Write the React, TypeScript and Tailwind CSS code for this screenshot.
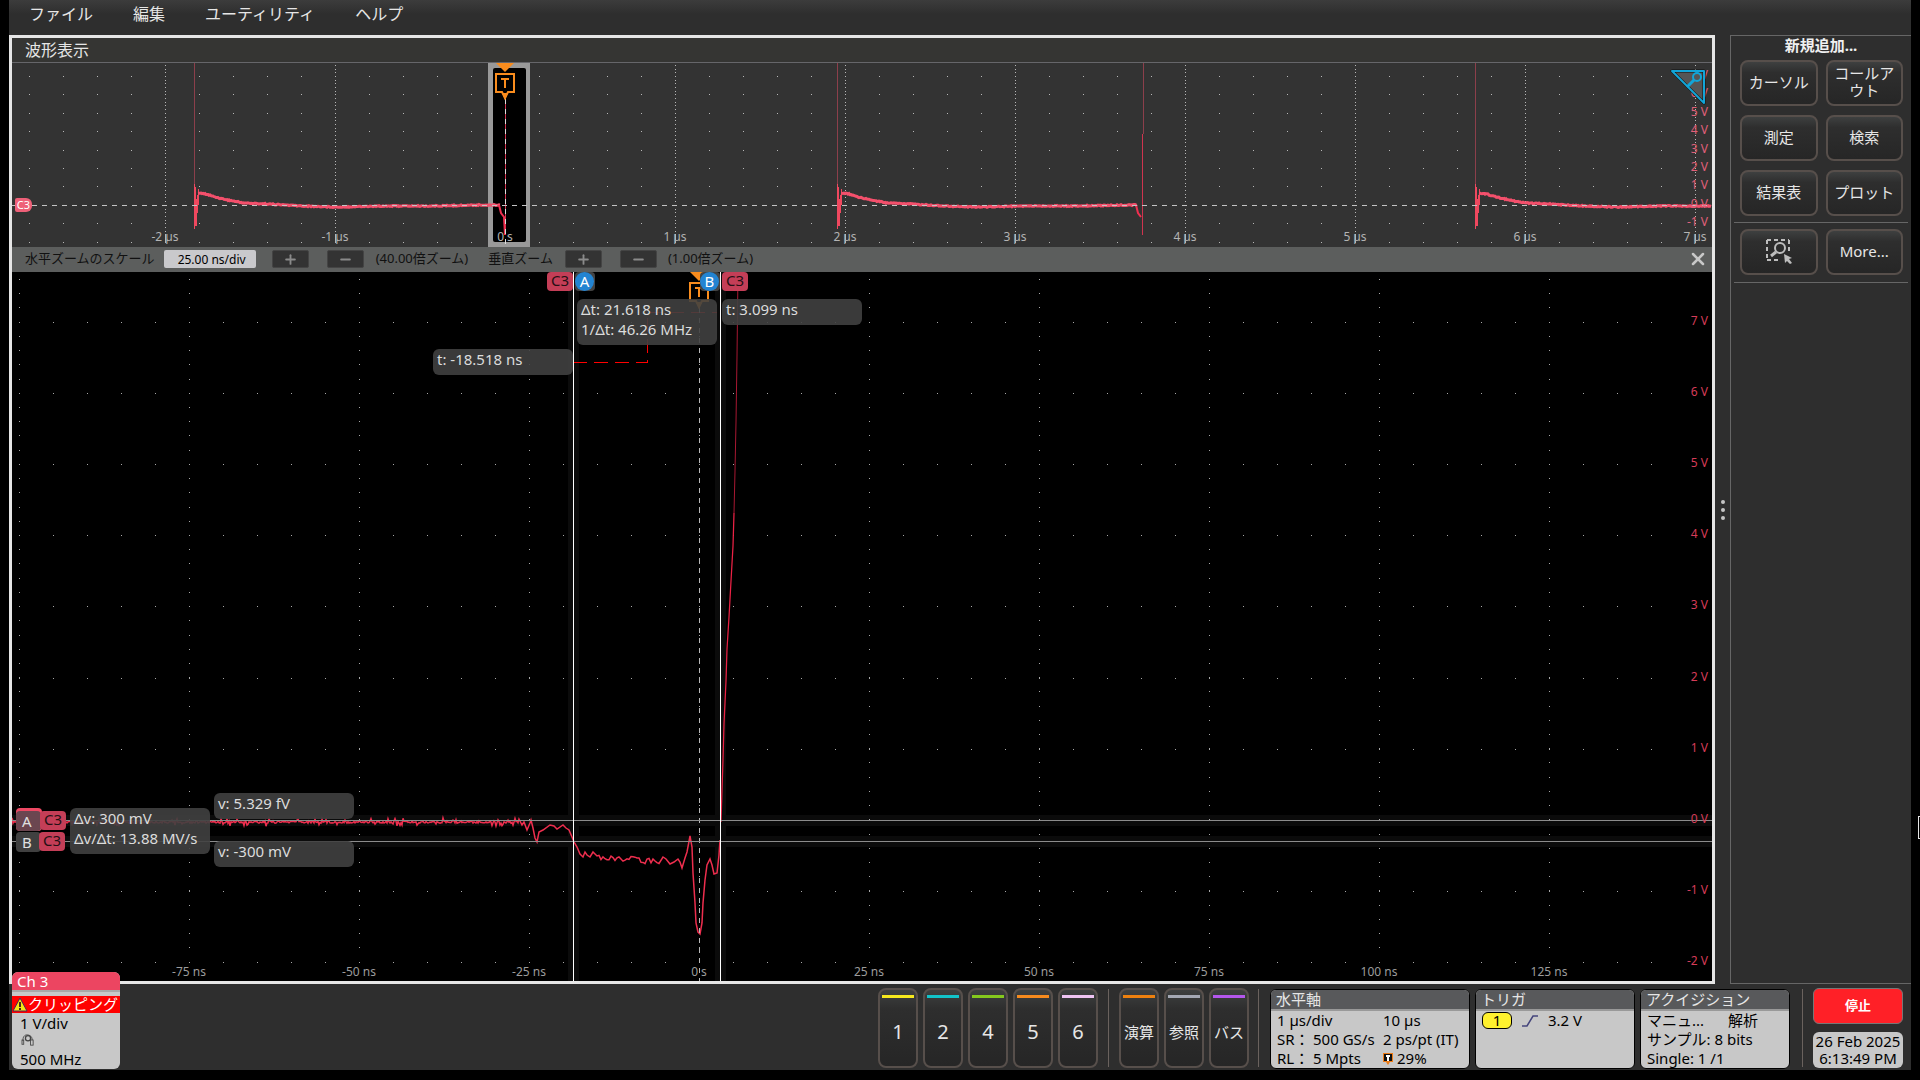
import React from 'react';
import { Plus, Minus, X } from 'lucide-react';

const PLOT_W = 1700;
const OVER_H = 184;
const MAIN_H = 709;

type Point = [number, number];

const toPath = (points: Point[]) => 'M' + points.map(([x, y]) => `${x} ${y}`).join('L');

const range = (n: number) => Array.from({ length: n }, (_, i) => i);

// small repeatable noise, so the trace looks the same on every render
const noise = (i: number) => {
  const v = Math.sin(i * 12.9898) * 43758.5453;
  return (v - Math.floor(v)) * 2 - 1;
};

const place = (x: number, y: number, h: number) => ({
  left: `${(x / PLOT_W) * 100}%`,
  top: `${(y / h) * 100}%`,
});

const gridDots = (
  x0: number,
  y0: number,
  rowStep: number,
  rows: number,
  colStep: number,
  colDots: number,
  colTop: number,
  skipRow: number
) => {
  let d = '';
  range(rows).forEach((r) => {
    if (r === skipRow) return;
    const y = Math.round(y0 + r * rowStep) + 0.5;
    for (let x = x0; x < PLOT_W - 40; x += 34) d += `M${x} ${y}h1`;
  });
  range(10).forEach((c) => {
    range(colDots).forEach((k) => {
      const x = c * 170 + (x0 === 7 ? 7 : 153);
      if (x < PLOT_W) d += `M${x} ${Math.round(colTop + k * colStep) + 0.5}h1`;
    });
  });
  return d;
};

const overviewGrid = gridDots(17, 13, 18.4, 10, 3.68, 48, 2, 7);
const mainGrid = gridDots(7, 50, 71.1, 10, 14.22, 49, 7, 7);
const overviewTicks = range(10)
  .map((c) => `M${153.5 + c * 170} 171v9`)
  .join('');

// one discharge cycle of the overview trace, relative to its leading edge
const decay: Point[] = [
  [4, 130], [12, 131], [21, 134], [34, 137], [50, 140], [74, 141],
  [108, 143], [140, 144], [193, 143], [240, 143], [286, 142],
];

const cycle = (x: number, end: number) => {
  const pts: Point[] = [];
  for (let i = 4; i <= end; i += 1) {
    let k = 0;
    while (k < decay.length - 2 && decay[k + 1][0] < i) k += 1;
    const [ax, ay] = decay[k];
    const [bx, by] = decay[k + 1];
    const t = Math.min(1, (i - ax) / (bx - ax));
    pts.push([x + i, ay + (by - ay) * t + noise(i + x) * 0.5]);
  }
  return toPath(pts);
};

const burst = (x: number) =>
  `M${x + 0.5} 121V166M${x + 1.5} 124V163M${x + 2.5} 136V163M${x + 3.5} 132V150M${x + 4.5} 126V142`;

const mainTrace = (() => {
  const pts: Point[] = [];
  for (let x = 0; x <= 506; x += 1) {
    const spike = noise(x * 3) > 0.84 ? 3 : noise(x * 5) < -0.9 ? -3 : 0;
    pts.push([x, 550 + noise(x) * 1.2 + spike]);
  }
  const knee: Point[] = [
    [507, 547], [510, 553], [512, 550], [515, 558], [518, 551], [519, 548], [521, 556],
    [523, 566], [525, 570], [527, 560], [531, 558], [538, 553], [542, 554], [545, 557],
    [551, 553], [554, 556], [557, 558], [560, 565], [562, 570], [565, 575], [568, 582],
    [571, 585], [573, 580], [575, 583], [578, 585], [581, 580], [585, 584],
  ];
  pts.push(...knee);
  for (let x = 587; x <= 648; x += 2) pts.push([x, 584.5 + (x - 587) * 0.09 + noise(x) * 3]);
  const tail: Point[] = [
    [651, 585], [654, 587], [658, 592], [662, 590], [666, 587], [668, 590], [670, 596],
    [673, 586], [675, 580], [678, 564], [680, 575], [681, 601], [683, 631], [684, 651],
    [686, 660], [688, 662], [690, 651], [691, 631], [693, 608], [695, 593], [698, 587],
    [700, 593], [702, 602], [705, 601], [707, 583], [708, 568],
  ];
  pts.push(...tail);
  return toPath(pts);
})();

const risingLow: Point[] = [
  [709, 550], [710, 518], [711, 488], [712, 452], [714, 409], [715, 377],
  [717, 345], [719, 309], [721, 274], [722, 241],
];
const risingHigh: Point[] = [[722, 241], [723, 199], [724, 150], [725, 84], [726, 0]];

const channels = [
  { label: '1', bar: 'bg-[#f5e81e]' },
  { label: '2', bar: 'bg-[#12c3c9]' },
  { label: '4', bar: 'bg-[#84c81e]' },
  { label: '5', bar: 'bg-[#f58a1e]' },
  { label: '6', bar: 'bg-[#eec3f2]' },
];

const extras = [
  { label: '演算', bar: 'bg-[#ec800f]' },
  { label: '参照', bar: 'bg-[#a4a8b4]' },
  { label: 'バス', bar: 'bg-[#b457ec]' },
];

const raised =
  'border-2 border-[#574f4b] rounded-lg bg-linear-to-b from-[#3e4040] via-[#2e2e2e] via-25% to-[#262626] text-[#e6e6e6]';

const TriggerTag = () => (
  <svg width="20" height="38" viewBox="0 0 20 38" aria-hidden="true">
    <path d="M1 0H19L10 9Z" fill="#f98c1d" />
    <path d="M1 11H19V29H13L10 35L7 29H1Z" fill="#000" stroke="#f98c1d" strokeWidth="2" />
    <path d="M7 30H13L10 37Z" fill="#f98c1d" />
    <path d="M6 16H14M10 16V25" stroke="#f98c1d" strokeWidth="2" />
  </svg>
);

const Readout = ({ x, y, lines }: { x: number; y: number; lines: string[] }) => (
  <div
    className="absolute w-[140px] rounded-md bg-[#404040]/90 px-1 pb-[6px] text-[15px] leading-[20px] whitespace-nowrap text-[#dcdcdc]"
    style={place(x, y, MAIN_H)}
  >
    {lines.map((line) => (
      <div key={line}>{line}</div>
    ))}
  </div>
);

const SourceTag = ({ x, y }: { x: number; y: number }) => (
  <div
    className="absolute h-[19px] w-[26px] rounded-sm bg-[#c43e57] text-center text-[15px] leading-[17px] text-[#241014]"
    style={place(x, y, MAIN_H)}
  >
    C3
  </div>
);

const CursorKnob = ({ x, label }: { x: number; label: string }) => (
  <div
    className="absolute h-[19px] w-[20px] rounded-sm bg-[#444]"
    style={place(x, 0, MAIN_H)}
  >
    <div className="h-[19px] w-[19px] rounded-full bg-[#2384d2] text-center text-[15px] leading-[18px] text-white">
      {label}
    </div>
  </div>
);

const Overview = () => (
  <div className="relative h-[184px] overflow-hidden bg-[#333]">
    <svg
      className="absolute inset-0 h-full w-full"
      viewBox={`0 0 ${PLOT_W} ${OVER_H}`}
      preserveAspectRatio="none"
      fill="none"
    >
      <path d={overviewGrid} stroke="#b8b8b8" shapeRendering="crispEdges" />
      <path d={overviewTicks} stroke="#b8b8b8" shapeRendering="crispEdges" />
      <rect x="476" y="0" width="42" height="184" fill="#999" />
      <rect x="481" y="5" width="33" height="174" rx="2" fill="#000" />
      <path d="M182.5 0V125M825.5 0V125M1131.5 0V71M1463.5 0V125" stroke="#8c3f4b" shapeRendering="crispEdges" />
      <path d="M1130.5 71V172M493.5 40V172" stroke="#d0344f" shapeRendering="crispEdges" />
      <path d={burst(182) + burst(825) + burst(1463)} stroke="#f0485f" />
      <path d={cycle(182, 306) + cycle(825, 300) + cycle(1463, 236)} stroke="#f4506c" strokeWidth="3" />
      <path d="M487 142L489 150L492 154L493 172M1124 142L1126 150L1129 154" stroke="#f02f50" strokeWidth="2" />
      <path d="M0 142.5H1700" stroke="#c4c4c4" strokeDasharray="5 5" shapeRendering="crispEdges" />
      <path d="M493.5 36V184" stroke="#dcdcdc" strokeDasharray="5 5" shapeRendering="crispEdges" />
    </svg>
    {['-2 µs', '-1 µs', '0 s', '1 µs', '2 µs', '3 µs', '4 µs', '5 µs', '6 µs', '7 µs'].map((t, i) => (
      <span
        key={t}
        className="absolute -translate-x-1/2 text-xs leading-[10px] whitespace-nowrap text-[#b4b4b4]"
        style={place(153 + i * 170, 169, OVER_H)}
      >
        {t}
      </span>
    ))}
    {range(9).map((i) => (
      <span
        key={i}
        className="absolute right-1 -translate-y-1/2 text-xs leading-[10px] text-[#e0607a]"
        style={{ top: `${((12 + i * 18.4) / OVER_H) * 100}%` }}
      >
        {7 - i} V
      </span>
    ))}
    <div className="absolute -translate-x-1/2" style={place(493, 0, OVER_H)}>
      <TriggerTag />
    </div>
    <div
      className="absolute flex h-[14px] w-[17px] items-center justify-center rounded-l-xs rounded-r-md bg-[#ee6078] text-[11px] text-white"
      style={place(3, 135, OVER_H)}
    >
      C3
    </div>
    <svg width="36" height="36" viewBox="0 0 36 36" className="absolute top-[6px] right-[6px]" fill="none">
      <path d="M2 2H34V34Z" fill="#555" stroke="#111" strokeWidth="3" strokeLinejoin="round" />
      <path d="M2 2H34V34Z" stroke="#12a5d8" strokeWidth="2" strokeLinejoin="round" />
      <circle cx="27" cy="8" r="4" stroke="#12a5d8" strokeWidth="2" />
      <path d="M24 11L17 18" stroke="#12a5d8" strokeWidth="3" />
    </svg>
  </div>
);

const ZoomStep = ({ kind, label }: { kind: 'plus' | 'minus'; label: string }) => (
  <button
    aria-label={label}
    className="flex h-[18px] w-[37px] items-center justify-center rounded-xs border border-[#444] bg-[#333] text-[#8a8a8a]"
  >
    {kind === 'plus' ? <Plus size={15} strokeWidth={3} /> : <Minus size={15} strokeWidth={3} />}
  </button>
);

const ZoomBar = () => (
  <div className="flex h-[25px] items-center bg-[#5c5e5d] pr-1 pb-px pl-[13px] text-[13px] whitespace-nowrap text-[#111]">
    <label htmlFor="hscale">水平ズームのスケール</label>
    <input
      id="hscale"
      type="text"
      defaultValue="25.00 ns/div"
      className="ml-[9px] h-[18px] w-[92px] rounded-xs bg-[#c9c9cc] pl-1 text-center text-xs text-black"
    />
    <div className="ml-4 flex gap-[18px]">
      <ZoomStep kind="plus" label="水平ズームを拡大" />
      <ZoomStep kind="minus" label="水平ズームを縮小" />
    </div>
    <span className="ml-3">(40.00倍ズーム)</span>
    <span className="ml-5">垂直ズーム</span>
    <div className="ml-3 flex gap-[18px]">
      <ZoomStep kind="plus" label="垂直ズームを拡大" />
      <ZoomStep kind="minus" label="垂直ズームを縮小" />
    </div>
    <span className="ml-[11px]">(1.00倍ズーム)</span>
    <button aria-label="ズームを閉じる" className="ml-auto text-[#c8c8c8]">
      <X size={20} strokeWidth={3} />
    </button>
  </div>
);

const MainPlot = () => (
  <div className="relative flex-1 overflow-hidden bg-black">
    <svg
      className="absolute inset-0 h-full w-full"
      viewBox={`0 0 ${PLOT_W} ${MAIN_H}`}
      preserveAspectRatio="none"
      fill="none"
    >
      <path d="M556 0H567V709H556ZM703 0H714V709H703ZM0 543H1700V554H0ZM0 564H1700V575H0Z" fill="#0b0b0b" />
      <path d={mainGrid} stroke="#a8a8a8" shapeRendering="crispEdges" />
      <path d={toPath(risingHigh)} stroke="#a81832" />
      <path d={toPath(risingLow)} stroke="#ec2245" strokeWidth="1.25" />
      <path d={mainTrace} stroke="#ee2e4e" strokeWidth="1.5" />
      <path d="M561 90.5H635.5V40.5H705" stroke="#ff0000" strokeDasharray="14 7" shapeRendering="crispEdges" />
      <path d="M687.5 36V709" stroke="#b8b8b8" strokeDasharray="5 5" shapeRendering="crispEdges" />
      <path d="M0 548.5H1700M0 569.5H1700" stroke="#8c8c8c" shapeRendering="crispEdges" />
      <path d="M561.5 0V709M708.5 0V709" stroke="#fff" shapeRendering="crispEdges" />
    </svg>
    {['-75 ns', '-50 ns', '-25 ns', '0 s', '25 ns', '50 ns', '75 ns', '100 ns', '125 ns'].map((t, i) => (
      <span
        key={t}
        className="absolute bottom-px -translate-x-1/2 text-xs whitespace-nowrap text-[#9c9c9c]"
        style={{ left: `${((177 + i * 170) / PLOT_W) * 100}%` }}
      >
        {t}
      </span>
    ))}
    {range(10).map((i) => (
      <span
        key={i}
        className="absolute right-1 -translate-y-1/2 text-xs text-[#d63c58]"
        style={{ top: `${((49 + i * 71.1) / MAIN_H) * 100}%` }}
      >
        {7 - i} V
      </span>
    ))}
    <div className="absolute -translate-x-1/2" style={place(687, 0, MAIN_H)}>
      <TriggerTag />
    </div>

    <SourceTag x={535} y={0} />
    <CursorKnob x={563} label="A" />
    <CursorKnob x={688} label="B" />
    <SourceTag x={710} y={0} />
    <Readout x={565} y={27} lines={['Δt: 21.618 ns', '1/Δt: 46.26 MHz']} />
    <Readout x={710} y={27} lines={['t: 3.099 ns']} />
    <Readout x={421} y={77} lines={['t: -18.518 ns']} />

    <div className="absolute h-[23px] w-[26px] rounded-sm bg-[#ee4863]" style={place(4, 536, MAIN_H)} />
    <div
      className="absolute h-[20px] w-[25px] rounded-sm bg-[#6b4650] pl-[6px] text-[15px] leading-[20px] text-[#e0e0e0]"
      style={place(4, 539, MAIN_H)}
    >
      A
    </div>
    <div
      className="absolute h-[20px] w-[25px] rounded-sm bg-[#404040] pl-[6px] text-[15px] leading-[20px] text-[#e0e0e0]"
      style={place(4, 560, MAIN_H)}
    >
      B
    </div>
    <SourceTag x={28} y={539} />
    <SourceTag x={27} y={560} />
    <Readout x={58} y={536} lines={['Δv: 300 mV', 'Δv/Δt: 13.88 MV/s']} />
    <Readout x={202} y={521} lines={['v: 5.329 fV']} />
    <Readout x={202} y={569} lines={['v: -300 mV']} />
  </div>
);

const SideButton = ({ children, label }: { children: React.ReactNode; label?: string }) => (
  <button
    aria-label={label}
    className={`flex h-[46px] items-center justify-center px-1 pb-[2px] text-[15px] leading-[17px] ${raised}`}
  >
    {children}
  </button>
);

const SidePanel = () => (
  <aside className="w-[181px] shrink-0 border-t border-b border-l border-[#666]">
    <h2 className="text-center text-[15px] leading-[18px] font-bold text-[#f0f0f0]">新規追加...</h2>
    <div className="grid grid-cols-2 gap-x-2 gap-y-[9px] pt-[6px] pr-2 pb-[6px] pl-[9px]">
      <SideButton>カーソル</SideButton>
      <SideButton>コールアウト</SideButton>
      <SideButton>測定</SideButton>
      <SideButton>検索</SideButton>
      <SideButton>結果表</SideButton>
      <SideButton>プロット</SideButton>
    </div>
    <div className="mx-[3px] grid grid-cols-2 gap-x-2 border-y border-[#666] pt-[6px] pr-[5px] pb-[7px] pl-[6px]">
      <SideButton label="範囲ズーム">
        <svg width="28" height="28" viewBox="0 0 28 28" fill="none" stroke="#bdbdbd">
          <path d="M2 3H24M2 23H16M2 3V23M24 3V16" strokeWidth="2" strokeDasharray="4 3" />
          <circle cx="15" cy="11" r="5" strokeWidth="2" />
          <path d="M11 15L6 19" strokeWidth="3" />
          <path d="M19 17L27 21L24 22L27 26L25 27L22 24L20 26Z" fill="#bdbdbd" stroke="none" />
        </svg>
      </SideButton>
      <SideButton>More...</SideButton>
    </div>
  </aside>
);

const ChannelButton = ({ label, bar, className }: { label: string; bar: string; className: string }) => (
  <button className={`flex h-[80px] w-[40px] flex-col items-center pt-[5px] ${raised} ${className}`}>
    <span className={`h-[3px] w-8 ${bar}`} />
    <span className="flex flex-1 items-center whitespace-nowrap">{label}</span>
  </button>
);

const Badge = ({ title, className, children }: { title: string; className: string; children: React.ReactNode }) => (
  <button
    className={`mt-[5px] flex h-[80px] flex-col overflow-hidden rounded-md border border-black bg-[#c8c8c8] text-left text-[15px] leading-[19px] whitespace-nowrap text-black ${className}`}
  >
    <span className="h-[21px] w-full border-b-2 border-[#999] bg-[#58595b] px-[5px] leading-[18px] text-[#e6e6e6]">{title}</span>
    {children}
  </button>
);

const Channel3Badge = () => (
  <button className="absolute bottom-px left-[3px] flex h-[97px] w-[108px] flex-col overflow-hidden rounded-md bg-[#c8c8c8] text-left text-[15px] leading-[19px] whitespace-nowrap text-black">
    <span className="h-[21px] w-full border-b-2 border-[#a8a8a8] bg-[#ec4561] px-[5px] leading-[18px] text-white">Ch 3</span>
    <span className="mt-1 flex h-[17px] w-full items-center bg-[#ff0000] text-white">
      <svg width="16" height="15" viewBox="0 0 16 15" className="shrink-0">
        <path d="M8 1L15 14H1Z" fill="#f5e614" stroke="#4a2a5a" />
        <path d="M8 5V10M8 11V13" stroke="#4a2a1a" strokeWidth="2" />
      </svg>
      クリッピング
    </span>
    <span className="mt-px px-2">1 V/div</span>
    <svg width="16" height="14" viewBox="0 0 16 14" className="mx-2 mt-px mb-[4px]" fill="none" stroke="#444">
      <path d="M2 8C2 3 4 1 7 1S13 3 13 7" />
      <circle cx="8" cy="5" r="3" strokeWidth="1.5" />
      <rect x="1" y="7" width="2" height="5" />
      <rect x="11" y="7" width="3" height="6" />
    </svg>
    <span className="px-2">500 MHz</span>
  </button>
);

const BottomBar = () => (
  <footer className="relative flex h-[86px] justify-end pr-2">
    <Channel3Badge />
    <div className="flex gap-[5px] pt-1">
      {channels.map((c) => (
        <ChannelButton key={c.label} {...c} className="text-[20px]" />
      ))}
    </div>
    <div className="mt-[5px] mr-[10px] ml-[10px] h-[78px] w-px bg-[#6a625e]" />
    <div className="flex gap-[5px] pt-1">
      {extras.map((c) => (
        <ChannelButton key={c.label} {...c} className="text-[15px]" />
      ))}
    </div>
    <div className="mt-[5px] mr-[11px] ml-[9px] h-[78px] w-px bg-[#6a625e]" />
    <div className="flex gap-[5px]">
      <Badge title="水平軸" className="w-[200px]">
        <span className="grid w-full grid-cols-[36px_70px_auto] px-[6px]">
          <span className="col-span-2">1 µs/div</span>
          <span>10 µs</span>
          <span>SR：</span>
          <span>500 GS/s</span>
          <span>2 ps/pt (IT)</span>
          <span>RL：</span>
          <span>5 Mpts</span>
          <span className="flex items-center gap-1">
            <svg width="10" height="12" viewBox="0 0 10 12">
              <path d="M0 0H10V9H7L5 12L3 9H0Z" fill="#ee7d18" />
              <path d="M1 1H9V8H1Z" fill="#111" />
              <path d="M3 3H7M5 3V8" stroke="#fff" strokeWidth="2" />
            </svg>
            29%
          </span>
        </span>
      </Badge>
      <Badge title="トリガ" className="w-[160px]">
        <span className="flex items-center px-[6px]">
          <span className="h-[17px] w-[30px] rounded-md border border-black bg-[#fff12e] text-center leading-[15px]">1</span>
          <svg width="16" height="12" viewBox="0 0 16 12" className="mx-[10px]" fill="none" stroke="#45457c" strokeWidth="1.5">
            <path d="M0 11H5L11 1H16" />
          </svg>
          3.2 V
        </span>
      </Badge>
      <Badge title="アクイジション" className="w-[150px]">
        <span className="px-[6px]">
          <span className="flex">
            <span className="w-[81px]">マニュ...</span>
            <span>解析</span>
          </span>
          <span className="block">サンプル: 8 bits</span>
          <span className="block">Single: 1 /1</span>
        </span>
      </Badge>
    </div>
    <div className="mt-[5px] mr-[10px] ml-3 h-[78px] w-px bg-[#6a625e]" />
    <div className="flex w-[90px] flex-col gap-2 pt-1">
      <button className="h-[36px] rounded-md border border-[#777] bg-[#ff2027] text-[13px] font-bold text-white">停止</button>
      <button className="h-[36px] rounded-md bg-[#c8c8c8] text-[15px] leading-[17px] whitespace-nowrap text-black">
        26 Feb 2025
        <br />
        6:13:49 PM
      </button>
    </div>
  </footer>
);

const App = () => {
  return (
    <div className="relative flex min-h-screen flex-col overflow-hidden bg-black px-[9px] pb-[10px] font-['Noto_Sans','Noto_Sans_CJK_JP',sans-serif]">
      <div className="flex flex-1 flex-col bg-[#2e2e2e]">
        <nav className="flex h-[35px] gap-10 bg-linear-to-b from-[#3c3c3c] to-[#2e2e2e] to-40% pl-5 text-base leading-[29px] text-[#e6e6e6]">
          <button className="h-[29px]">ファイル</button>
          <button className="h-[29px]">編集</button>
          <button className="h-[29px]">ユーティリティ</button>
          <button className="h-[29px]">ヘルプ</button>
        </nav>

        <div className="flex flex-1">
          <main className="flex flex-1 flex-col border-3 border-[#e6e6e6]">
            <h1 className="h-[25px] border-b border-[#66666a] bg-[#353533] pl-[13px] text-base leading-[25px] text-[#e6e6e6]">波形表示</h1>
            <Overview />
            <ZoomBar />
            <MainPlot />
          </main>
          <button aria-label="パネルを開閉" className="flex w-[15px] flex-col items-center justify-center gap-1">
            <span className="h-1 w-1 rounded-full bg-[#c4c4c4]" />
            <span className="h-1 w-1 rounded-full bg-[#c4c4c4]" />
            <span className="h-1 w-1 rounded-full bg-[#c4c4c4]" />
          </button>
          <SidePanel />
        </div>

        <BottomBar />
      </div>

      {/* collapsed drawer handle on the screen edge */}
      <div className="absolute top-[816px] right-0 h-[23px] w-[2px] border-y border-l border-[#e6e6e6]" />
    </div>
  );
};

export default App;
